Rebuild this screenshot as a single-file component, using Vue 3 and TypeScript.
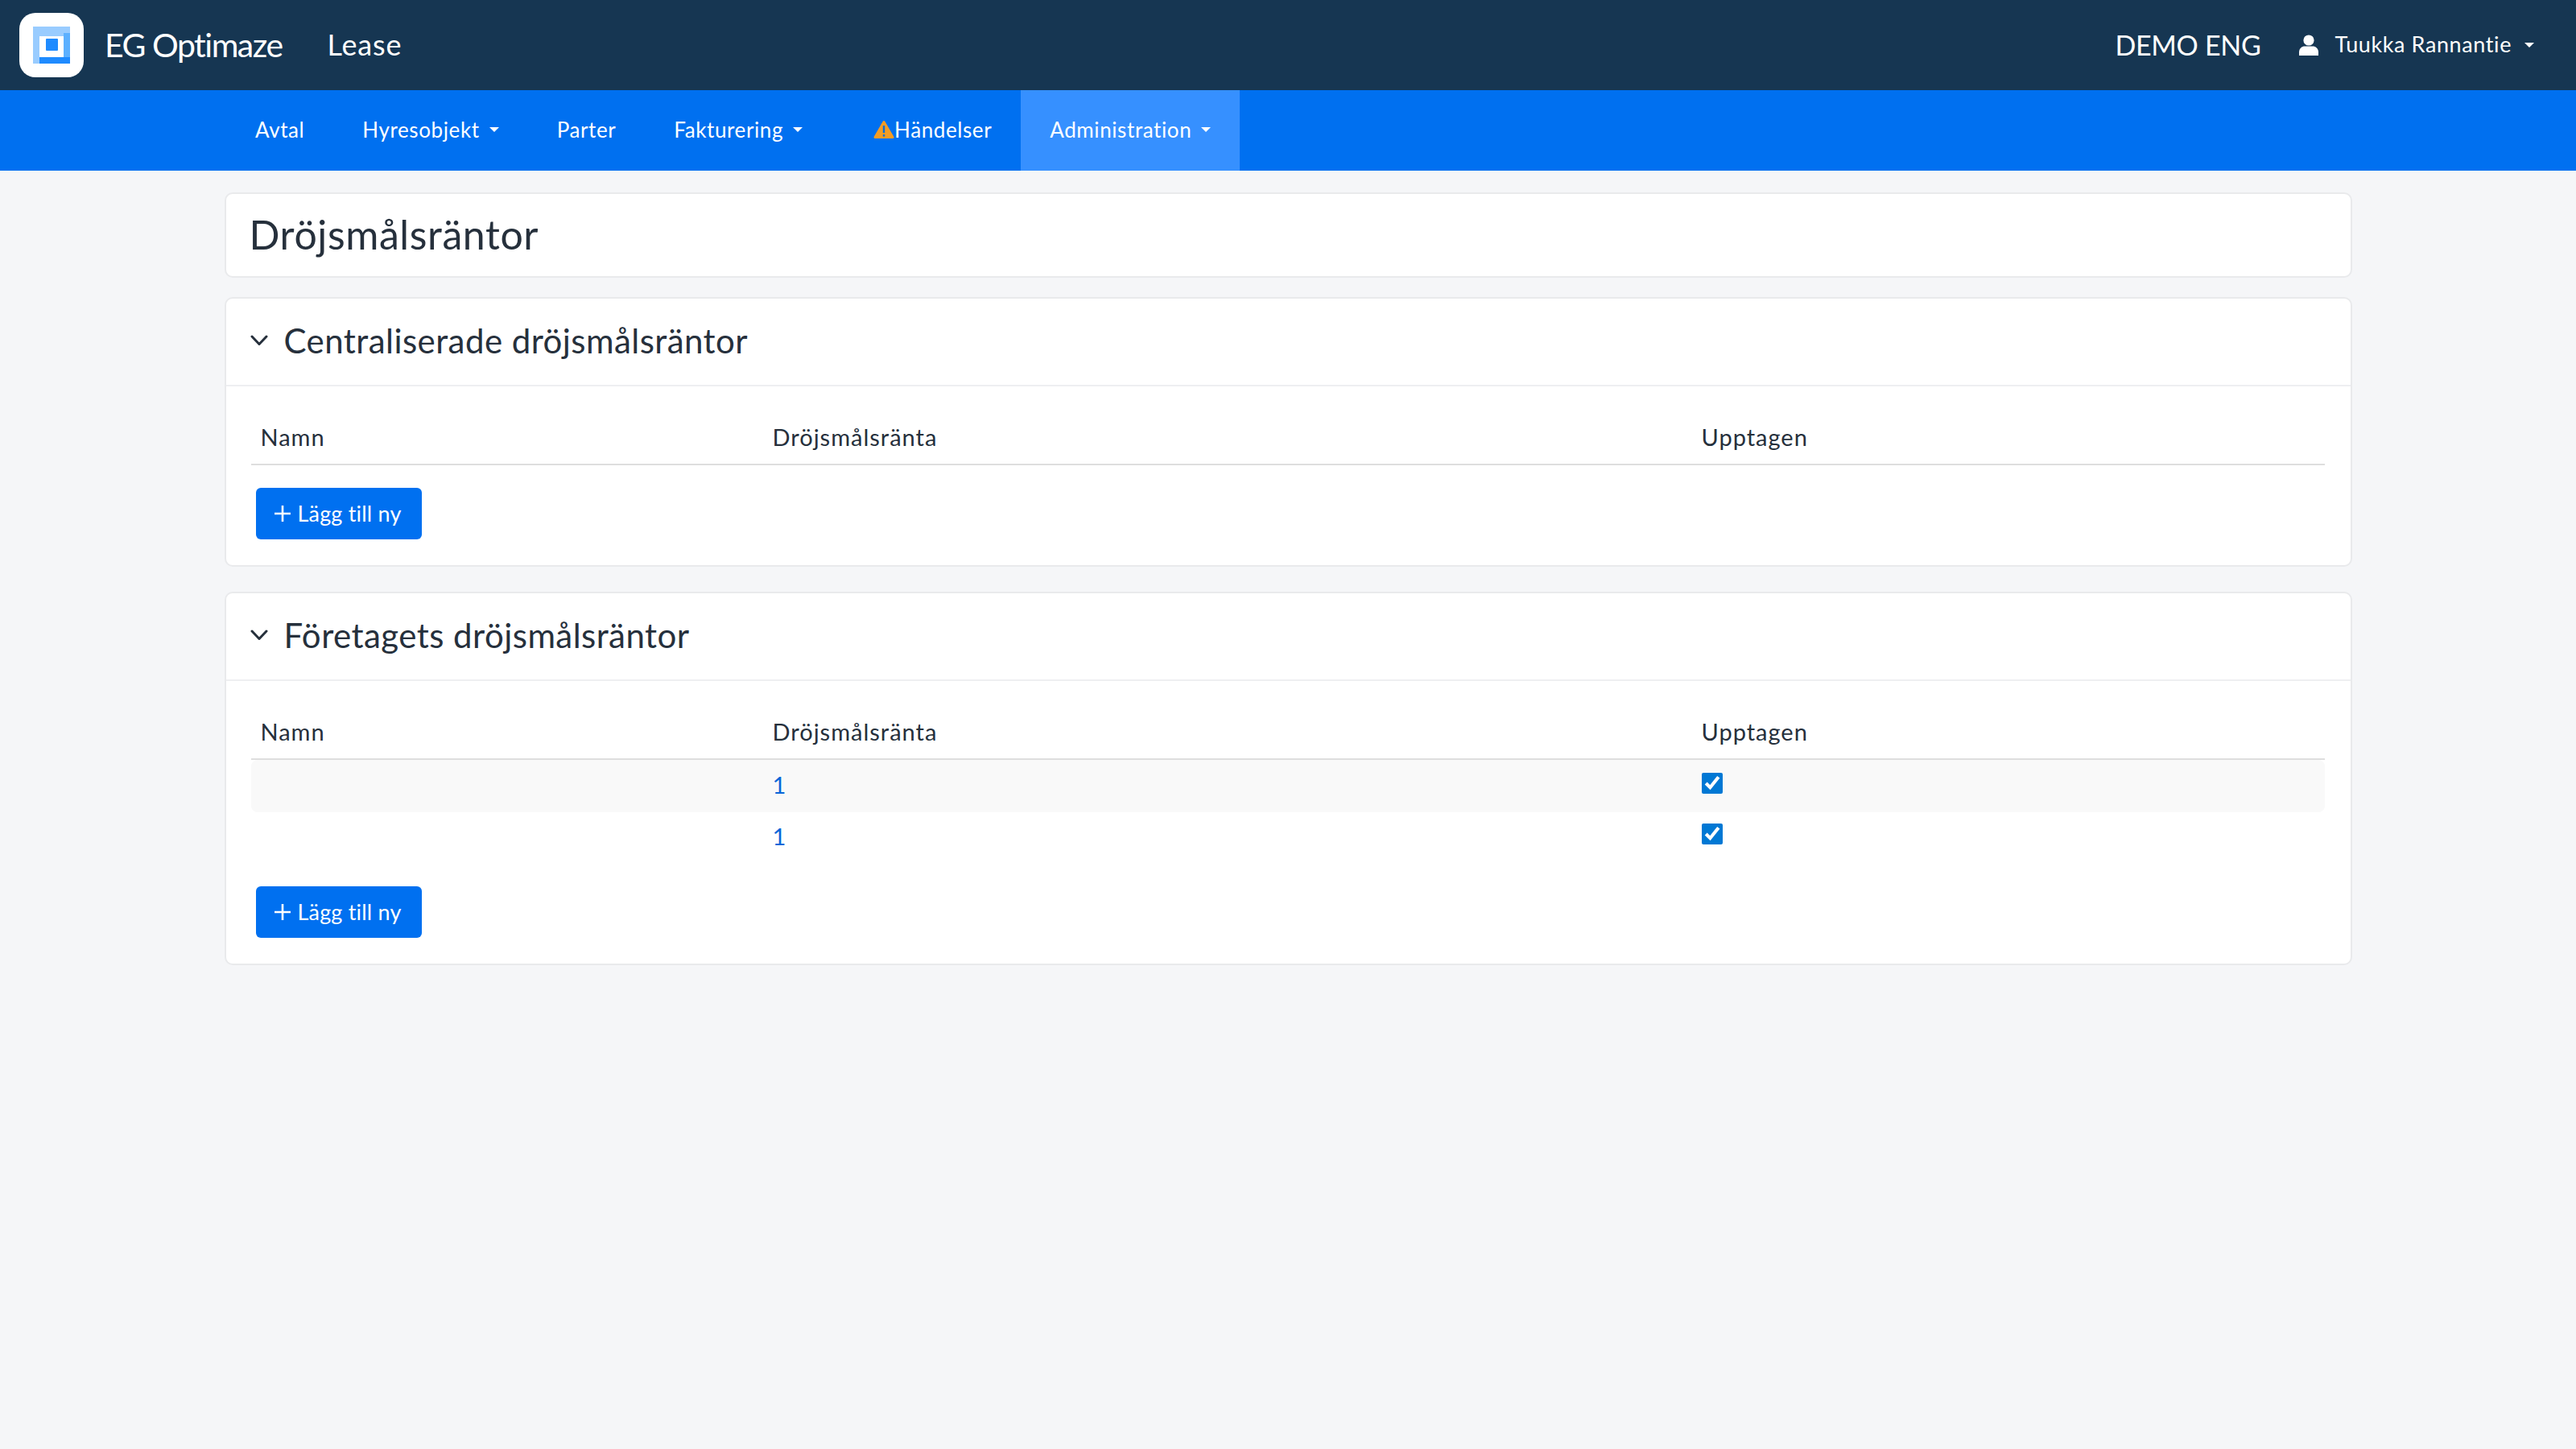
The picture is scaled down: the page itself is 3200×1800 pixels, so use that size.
<template>
  <div class="page">
    <header class="topbar">
      <div class="logo-tile">
        <svg width="46" height="46" viewBox="0 0 46 46">
          <rect x="0" y="0" width="46" height="12" fill="#99ccff" />
          <rect x="38" y="8" width="8" height="30" fill="#5cb0ff" />
          <rect x="0" y="12" width="8" height="34" fill="#99ccff" />
          <rect x="8" y="38" width="38" height="8" fill="#1f8bff" />
          <rect x="16" y="15" width="15" height="15" rx="1" fill="#1f8bff" />
        </svg>
      </div>
      <span class="brand">EG Optimaze</span>
      <span class="product">Lease</span>
      <span class="tenant">DEMO ENG</span>
      <div class="user">
        <svg class="user-icon" width="24" height="26" viewBox="0 0 24 26">
          <circle cx="12" cy="7" r="6.6" fill="#fff" />
          <path d="M0 26v-4c0-5 3.5-7.5 7-7.5h10c3.500 0 7 2.500 7 7.500v4z" fill="#fff" />
        </svg>
        <span>Tuukka Rannantie</span>
        <i class="caret"></i>
      </div>
    </header>

    <nav class="mainnav">
      <a v-for="item in navItems" :key="item.label" class="nav-item" :class="{ active: item.active, warn: item.warn }">
        <svg v-if="item.warn" class="warn-icon" width="26" height="24" viewBox="0 0 26 24">
          <path d="M13 2.500 24 21.500H2z" fill="#f39c25" stroke="#f39c25" stroke-width="3" stroke-linejoin="round" />
          <rect x="11.800" y="7" width="2.400" height="9" fill="#0a6fd8" />
          <rect x="11.800" y="18" width="2.400" height="2.600" fill="#0a6fd8" />
        </svg>
        <span>{{ item.label }}</span>
        <i v-if="item.menu" class="caret"></i>
      </a>
    </nav>

    <main class="content">
      <section class="card title-card">
        <h1>Dröjsmålsräntor</h1>
      </section>

      <section v-for="section in sections" :key="section.title" class="card">
        <div class="card-head">
          <svg width="22" height="14" viewBox="0 0 22 14">
            <path d="M2 2l9 9.500L20 2" fill="none" stroke="#26303c" stroke-width="3" stroke-linecap="round" stroke-linejoin="round" />
          </svg>
          <h2>{{ section.title }}</h2>
        </div>
        <div class="card-body">
          <div class="table">
            <div class="row head">
              <div>Namn</div>
              <div>Dröjsmålsränta</div>
              <div>Upptagen</div>
            </div>
            <div v-for="(row, i) in section.rows" :key="i" class="row" :class="i % 2 === 0 ? 'striped' : 'plain'">
              <div>{{ row.name }}</div>
              <div><a class="link">{{ row.rate }}</a></div>
              <div><input type="checkbox" :checked="row.taken" /></div>
            </div>
          </div>
          <button class="add-btn" type="button">
            <svg width="22" height="22" viewBox="0 0 22 22">
              <path d="M11 1v20M1 11h20" stroke="#fff" stroke-width="2.600" fill="none" />
            </svg>
            <span>Lägg till ny</span>
          </button>
        </div>
      </section>
    </main>
  </div>
</template>

<script setup lang="ts">
interface NavItem {
  label: string
  menu?: boolean
  warn?: boolean
  active?: boolean
}

interface RateRow {
  name: string
  rate: string
  taken: boolean
}

const navItems: NavItem[] = [
  { label: 'Avtal' },
  { label: 'Hyresobjekt', menu: true },
  { label: 'Parter' },
  { label: 'Fakturering', menu: true },
  { label: 'Händelser', warn: true },
  { label: 'Administration', menu: true, active: true }
]

const sections: { title: string; rows: RateRow[] }[] = [
  { title: 'Centraliserade dröjsmålsräntor', rows: [] },
  {
    title: 'Företagets dröjsmålsräntor',
    rows: [
      { name: '', rate: '1', taken: true },
      { name: '', rate: '1', taken: true }
    ]
  }
]
</script>

<style>
body {
  margin: 0;
  background: #f5f6f8;
}
</style>

<style scoped>
.page {
  min-height: 1800px;
  background: #f5f6f8;
  font-family: Lato, "Noto Sans", sans-serif;
  font-size: 29px;
  color: #26303c;
  letter-spacing: 1px;
}

.topbar {
  height: 112px;
  background: #163652;
  color: #fff;
  display: flex;
  align-items: center;
  padding: 0 52px 0 24px;
  box-sizing: border-box;
}

.logo-tile {
  width: 80px;
  height: 80px;
  background: #fff;
  border-radius: 20px;
  display: flex;
  align-items: center;
  justify-content: center;
}

.brand {
  font-size: 41px;
  margin-left: 26px;
  letter-spacing: -1.500px;
  margin-bottom: 2px;
}

.product {
  font-size: 36px;
  margin-left: 56px;
  letter-spacing: 0.800px;
  margin-bottom: 2px;
}

.tenant {
  font-size: 34px;
  margin-left: auto;
  letter-spacing: -0.300px;
  margin-bottom: 2px;
}

.user {
  display: flex;
  align-items: center;
  margin-left: 48px;
  font-size: 27px;
  letter-spacing: 0.600px;
}

.user span {
  margin-bottom: 3px;
}

.user-icon {
  margin-right: 20px;
}

.caret {
  display: inline-block;
  width: 0;
  height: 0;
  border-left: 6px solid transparent;
  border-right: 6px solid transparent;
  border-top: 6px solid #fff;
  margin-left: 12px;
}

.user .caret {
  margin-left: 16px;
}

.mainnav {
  height: 100px;
  background: #0070f0;
  display: flex;
  padding-left: 281px;
  color: #fff;
  font-size: 26px;
  letter-spacing: 0.600px;
}

.nav-item {
  display: flex;
  align-items: center;
  padding: 0 36px 2px;
}

.nav-item.warn {
  padding-left: 52px;
}

.nav-item.active {
  background: #3690ff;
}

.warn-icon {
  flex-shrink: 0;
}

.content {
  width: 2643px;
  margin: 0 auto;
  padding-top: 27px;
}

.card {
  background: #fff;
  border: 2px solid #e9eaec;
  border-radius: 10px;
  margin-bottom: 31px;
  box-sizing: border-box;
}

.title-card {
  height: 106px;
  margin-bottom: 24px;
  display: flex;
  align-items: center;
  padding: 0 0 3px 29px;
}

h1 {
  margin: 0;
  font-size: 50px;
  font-weight: 400;
  letter-spacing: 0.600px;
}

.card-head {
  height: 109px;
  display: flex;
  align-items: center;
  border-bottom: 2px solid #eeeff1;
  padding: 0 0 3px 30px;
  box-sizing: border-box;
}

h2 {
  margin: 0 0 0 20px;
  font-size: 42px;
  font-weight: 400;
  letter-spacing: 0.450px;
}

.card-body {
  padding: 33px 32px 32px 31px;
}

.row {
  display: grid;
  grid-template-columns: 636px 1154px 1fr;
  height: 65px;
  align-items: center;
  padding-bottom: 4px;
  box-sizing: border-box;
}

.row > div {
  padding-left: 12px;
}

.row.head {
  border-bottom: 2px solid #dedede;
}

.row.striped {
  background: #f9f9f9;
  border-radius: 8px;
}

.row.plain {
  height: 64px;
  margin-bottom: 1px;
  padding-bottom: 6px;
}

.link {
  color: #0a66d8;
}

input[type="checkbox"] {
  width: 26px;
  height: 26px;
  margin: 0 0 4px;
  display: block;
  accent-color: #0078d4;
}

.add-btn {
  display: flex;
  align-items: center;
  gap: 8px;
  height: 64px;
  width: 206px;
  margin: 28px 0 0 6px;
  padding: 0 0 0 22px;
  border: 0;
  border-radius: 6px;
  background: #0070f0;
  color: #fff;
  font: inherit;
  font-size: 27px;
  letter-spacing: 0.200px;
}

.add-btn span {
  margin-bottom: 2px;
}
</style>
